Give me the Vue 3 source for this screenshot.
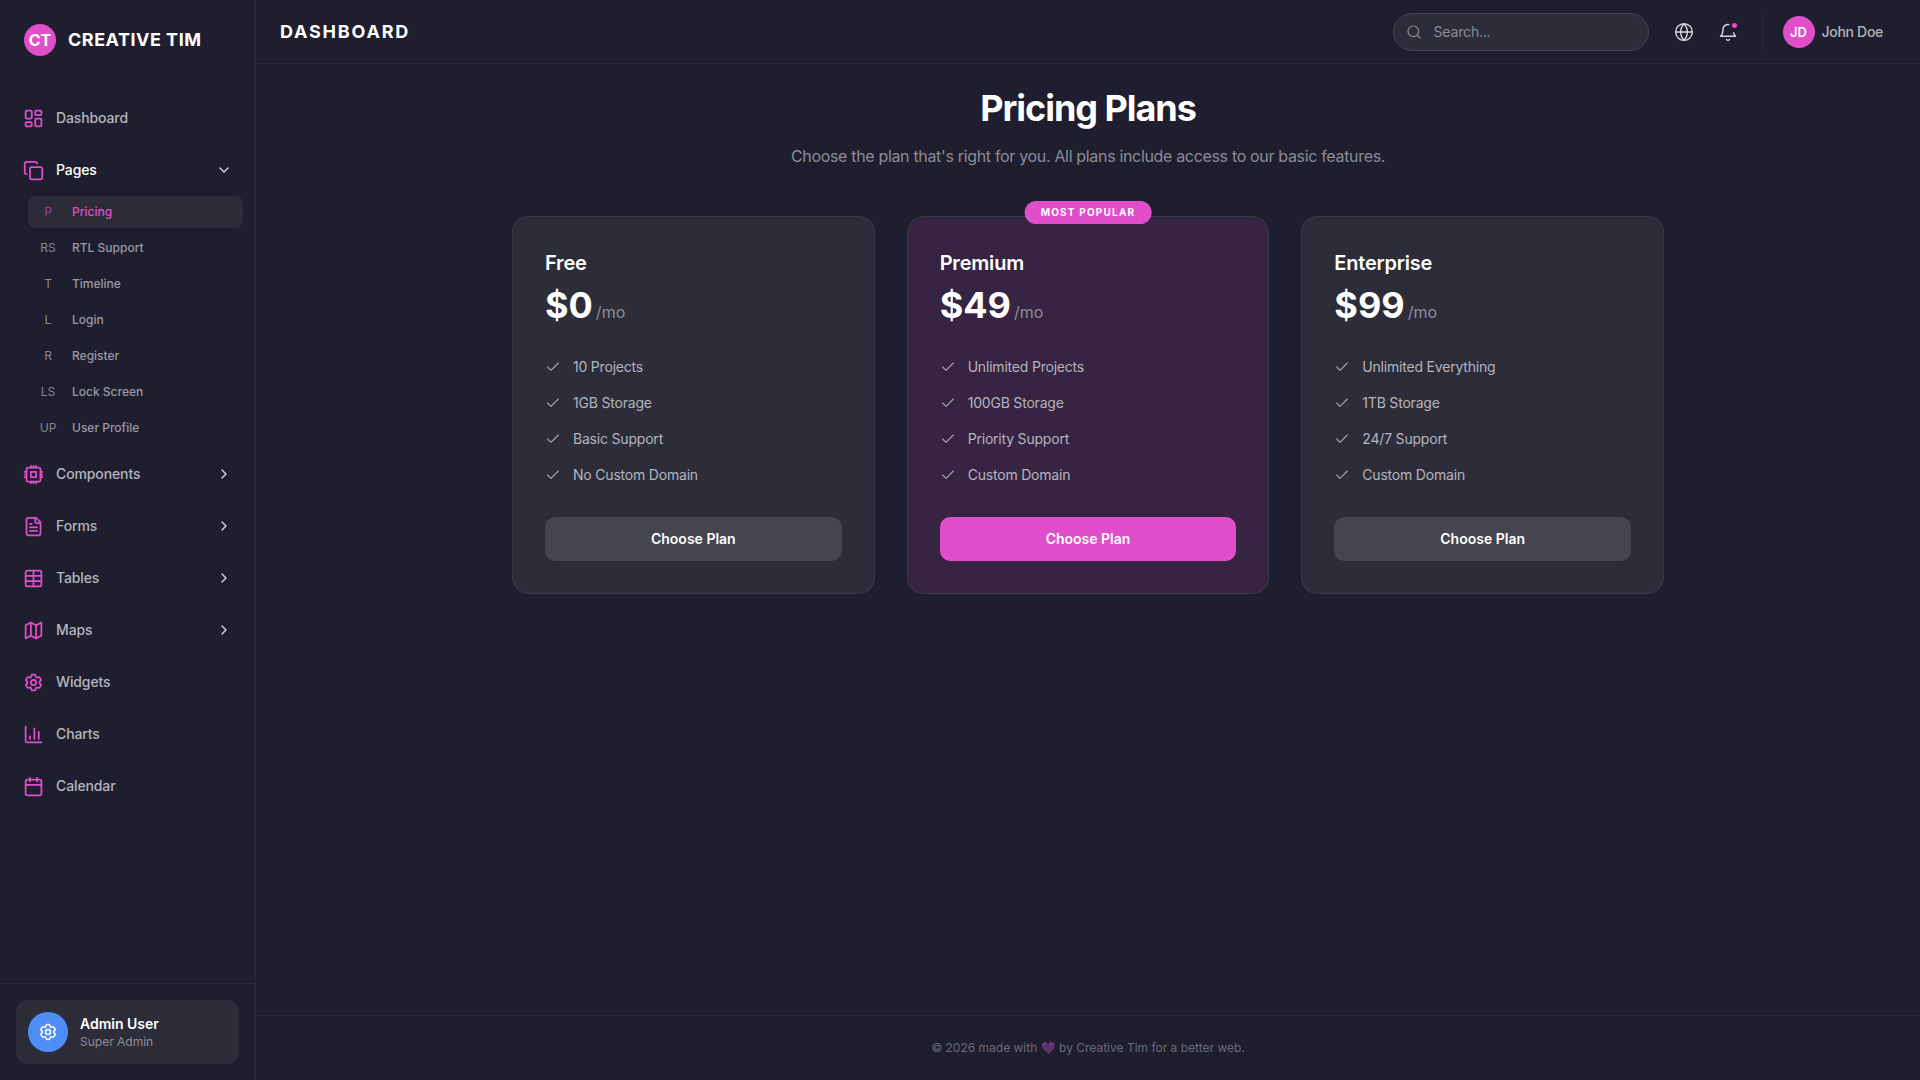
<template>
  <div class="layout">
    <aside class="sidebar">
      <div class="brand">
        <div class="brand-logo">CT</div>
        <span class="brand-name">CREATIVE TIM</span>
      </div>

      <nav class="nav">
        <template v-for="item in navItems" :key="item.label">
          <div class="nav-item" :class="{ open: item.children }">
            <svg class="nav-icon" viewBox="0 0 24 24" v-html="item.icon"></svg>
            <span class="nav-label">{{ item.label }}</span>
            <svg v-if="item.children" class="chevron" viewBox="0 0 24 24"><path d="m6 9 6 6 6-6" /></svg>
            <svg v-else-if="item.more" class="chevron" viewBox="0 0 24 24"><path d="m9 18 6-6-6-6" /></svg>
          </div>
          <div v-if="item.children" class="subnav">
            <div
              v-for="child in item.children"
              :key="child.label"
              class="sub-item"
              :class="{ active: child.active }"
            >
              <span class="sub-short">{{ child.short }}</span>
              <span class="sub-label">{{ child.label }}</span>
            </div>
          </div>
        </template>
      </nav>

      <div class="side-footer">
        <div class="admin-card">
          <div class="admin-avatar">
            <svg viewBox="0 0 24 24" v-html="gearIcon"></svg>
          </div>
          <div class="admin-text">
            <div class="admin-name">Admin User</div>
            <div class="admin-role">Super Admin</div>
          </div>
        </div>
      </div>
    </aside>

    <div class="content">
      <header class="topbar">
        <h2 class="page-title">DASHBOARD</h2>
        <div class="topbar-right">
          <div class="search">
            <svg viewBox="0 0 24 24"><circle cx="11" cy="11" r="8" /><path d="m21 21-4.3-4.3" /></svg>
            <span>Search...</span>
          </div>
          <svg class="top-icon globe" viewBox="0 0 24 24">
            <circle cx="12" cy="12" r="10" />
            <path d="M12 2a14.5 14.5 0 0 0 0 20 14.5 14.5 0 0 0 0-20" />
            <path d="M2 12h20" />
          </svg>
          <div class="bell">
            <svg class="top-icon" viewBox="0 0 24 24">
              <path d="M10.3 21a1.94 1.94 0 0 0 3.4 0" />
              <path d="M13 3.1A6 6 0 0 0 6 8c0 7-3 9-3 9h18s-1.4-1-2.3-4" />
            </svg>
            <span class="bell-dot"></span>
          </div>
          <div class="divider"></div>
          <div class="user">
            <div class="user-avatar">JD</div>
            <span class="user-name">John Doe</span>
          </div>
        </div>
      </header>

      <main class="main">
        <h1 class="title">Pricing Plans</h1>
        <p class="subtitle">Choose the plan that's right for you. All plans include access to our basic features.</p>

        <div class="plans">
          <div v-for="plan in plans" :key="plan.name" class="plan" :class="{ featured: plan.featured }">
            <span v-if="plan.featured" class="badge">MOST POPULAR</span>
            <h3 class="plan-name">{{ plan.name }}</h3>
            <div class="price">
              <span class="amount">{{ plan.price }}</span>
              <span class="per">/mo</span>
            </div>
            <ul class="features">
              <li v-for="f in plan.features" :key="f">
                <svg viewBox="0 0 24 24"><path d="M20 6 9 17l-5-5" /></svg>
                {{ f }}
              </li>
            </ul>
            <button class="choose">Choose Plan</button>
          </div>
        </div>
      </main>

      <footer class="footer">
        <span>© 2026 made with <span class="heart">💜</span> by Creative Tim for a better web.</span>
      </footer>
    </div>
  </div>
</template>

<script setup>
const gearIcon = `<path d="M9.594 3.94c.09-.542.56-.94 1.11-.94h2.593c.55 0 1.02.398 1.11.94l.213 1.281c.063.374.313.686.645.87.074.04.147.083.22.127.325.196.72.257 1.075.124l1.217-.456a1.125 1.125 0 0 1 1.37.49l1.296 2.247a1.125 1.125 0 0 1-.26 1.431l-1.003.827c-.293.241-.438.613-.43.992a7.723 7.723 0 0 1 0 .255c-.008.378.137.75.43.991l1.004.827c.424.35.534.955.26 1.43l-1.298 2.247a1.125 1.125 0 0 1-1.369.491l-1.217-.456c-.355-.133-.75-.072-1.076.124a6.47 6.47 0 0 1-.22.128c-.331.183-.581.495-.644.869l-.213 1.281c-.09.543-.56.94-1.11.94h-2.594c-.55 0-1.019-.398-1.11-.94l-.213-1.281c-.062-.374-.312-.686-.644-.87a6.52 6.52 0 0 1-.22-.127c-.325-.196-.72-.257-1.076-.124l-1.217.456a1.125 1.125 0 0 1-1.369-.49l-1.297-2.247a1.125 1.125 0 0 1 .26-1.431l1.004-.827c.292-.24.437-.613.43-.991a6.932 6.932 0 0 1 0-.255c.007-.38-.138-.751-.43-.992l-1.004-.827a1.125 1.125 0 0 1-.26-1.43l1.297-2.247a1.125 1.125 0 0 1 1.37-.491l1.216.456c.356.133.751.072 1.076-.124.072-.044.146-.086.22-.128.332-.183.582-.495.644-.869l.214-1.28Z"/><circle cx="12" cy="12" r="3"/>`

const navItems = [
  { label: 'Dashboard', icon: '<rect x="3" y="3" width="7" height="9" rx="1"/><rect x="14" y="3" width="7" height="5" rx="1"/><rect x="14" y="12" width="7" height="9" rx="1"/><rect x="3" y="16" width="7" height="5" rx="1"/>' },
  {
    label: 'Pages',
    icon: '<rect x="8" y="8" width="14" height="14" rx="2"/><path d="M4 16c-1.1 0-2-.9-2-2V4c0-1.1.9-2 2-2h10c1.1 0 2 .9 2 2"/>',
    children: [
      { short: 'P', label: 'Pricing', active: true },
      { short: 'RS', label: 'RTL Support' },
      { short: 'T', label: 'Timeline' },
      { short: 'L', label: 'Login' },
      { short: 'R', label: 'Register' },
      { short: 'LS', label: 'Lock Screen' },
      { short: 'UP', label: 'User Profile' },
    ],
  },
  { label: 'Components', more: true, icon: '<rect x="4" y="4" width="16" height="16" rx="2"/><rect x="9" y="9" width="6" height="6"/><path d="M15 2v2M15 20v2M2 15h2M2 9h2M20 15h2M20 9h2M9 2v2M9 20v2M12 2v2M12 20v2M2 12h2M20 12h2"/>' },
  { label: 'Forms', more: true, icon: '<path d="M15 2H6a2 2 0 0 0-2 2v16a2 2 0 0 0 2 2h12a2 2 0 0 0 2-2V7Z"/><path d="M14 2v4a2 2 0 0 0 2 2h4"/><path d="M10 9H8M16 13H8M16 17H8"/>' },
  { label: 'Tables', more: true, icon: '<rect x="3" y="3" width="18" height="18" rx="2"/><path d="M3 9h18M3 15h18M12 3v18"/>' },
  { label: 'Maps', more: true, icon: '<path d="M3 6l6-3 6 3 6-3v15l-6 3-6-3-6 3Z"/><path d="M9 3v15M15 6v15"/>' },
  { label: 'Widgets', icon: gearIcon },
  { label: 'Charts', icon: '<path d="M3 3v16a2 2 0 0 0 2 2h16"/><path d="M18 17V9M13 17V5M8 17v-3"/>' },
  { label: 'Calendar', icon: '<path d="M8 2v4M16 2v4"/><rect x="3" y="4" width="18" height="18" rx="2"/><path d="M3 10h18"/>' },
]

const plans = [
  { name: 'Free', price: '$0', features: ['10 Projects', '1GB Storage', 'Basic Support', 'No Custom Domain'] },
  { name: 'Premium', price: '$49', featured: true, features: ['Unlimited Projects', '100GB Storage', 'Priority Support', 'Custom Domain'] },
  { name: 'Enterprise', price: '$99', features: ['Unlimited Everything', '1TB Storage', '24/7 Support', 'Custom Domain'] },
]
</script>

<style>
html, body {
  margin: 0;
  background: #1e1e2e;
}
</style>

<style scoped>
* {
  box-sizing: border-box;
}
svg {
  fill: none;
  stroke: currentColor;
  stroke-width: 2;
  stroke-linecap: round;
  stroke-linejoin: round;
}
.layout {
  display: flex;
  height: 1080px;
  font-family: Inter, "Liberation Sans", sans-serif;
  background: #1e1e2e;
  color: #fff;
  overflow: hidden;
}
.sidebar {
  width: 256px;
  flex-shrink: 0;
  display: flex;
  flex-direction: column;
  border-right: 1px solid #2d2d3a;
}
.brand {
  display: flex;
  align-items: flex-start;
  gap: 12px;
  padding: 24px 24px 0;
  height: 80px;
  margin-bottom: 12px;
}
.brand-logo {
  width: 32px;
  height: 32px;
  border-radius: 50%;
  background: #e14eca;
  display: flex;
  align-items: center;
  justify-content: center;
  font-size: 16px;
  font-weight: 700;
  flex-shrink: 0;
}
.brand-name {
  font-size: 18px;
  line-height: 32px;
  font-weight: 700;
  letter-spacing: 0.5px;
}
.nav {
  flex: 1;
  padding: 0 12px;
}
.nav-item {
  display: flex;
  align-items: center;
  height: 52px;
  padding: 0 11px 0 12px;
  font-size: 14px;
  font-weight: 500;
  letter-spacing: -0.12px;
  color: #b4b4bd;
}
.nav-item.open {
  color: #fff;
}
.nav-icon {
  width: 21px;
  height: 21px;
  margin: 0 12px 0 -1px;
  color: #e14eca;
}
.nav-label {
  flex: 1;
  padding-bottom: 2px;
}
.chevron {
  width: 16px;
  height: 16px;
  color: #d7d7dc;
}
.subnav {
  padding: 0 0 0 16px;
}
.sub-item {
  display: flex;
  align-items: center;
  height: 32px;
  margin-bottom: 4px;
  border-radius: 8px;
  font-size: 12px;
  font-weight: 500;
  color: #9a9aa5;
}
.sub-item.active {
  background: #2d2d3a;
  color: #e14eca;
}
.sub-short {
  width: 40px;
  margin-right: 4px;
  padding-bottom: 2px;
  text-align: center;
  font-size: 12px;
  font-weight: 400;
  opacity: 0.85;
}
.sub-label {
  padding-bottom: 2px;
}
.sub-item.active .sub-short {
  opacity: 0.6;
}
.side-footer {
  border-top: 1px solid #2d2d3a;
  padding: 16px;
}
.admin-card {
  display: flex;
  align-items: center;
  gap: 12px;
  height: 64px;
  padding: 0 12px;
  border-radius: 12px;
  background: #2d2d3a;
}
.admin-avatar {
  width: 40px;
  height: 40px;
  border-radius: 50%;
  background: #4f8ef7;
  display: flex;
  align-items: center;
  justify-content: center;
}
.admin-avatar svg {
  width: 20px;
  height: 20px;
  stroke-width: 1.8;
}
.admin-text {
  padding-top: 1px;
}
.admin-name {
  font-size: 14px;
  font-weight: 600;
  line-height: 18px;
}
.admin-role {
  margin-top: 1px;
  font-size: 12px;
  line-height: 16px;
  color: #8c8c97;
}
.content {
  flex: 1;
  min-width: 0;
  display: flex;
  flex-direction: column;
}
.topbar {
  height: 64px;
  flex-shrink: 0;
  display: flex;
  align-items: center;
  justify-content: space-between;
  padding: 0 37px 0 24px;
  border-bottom: 1px solid #2d2d3a;
}
.page-title {
  margin: 0;
  font-size: 18px;
  font-weight: 700;
  letter-spacing: 0.1em;
}
.topbar-right {
  display: flex;
  align-items: center;
}
.search {
  width: 256px;
  height: 38px;
  display: flex;
  align-items: center;
  gap: 12px;
  padding: 0 12px;
  border: 1px solid #45454f;
  border-radius: 19px;
  background: #2d2d3a;
  font-size: 14px;
  letter-spacing: -0.15px;
  color: #8c8c97;
}
.search svg {
  width: 16px;
  height: 16px;
  stroke-width: 1.8;
}
.top-icon {
  width: 20px;
  height: 20px;
  color: #d7d7dc;
  display: block;
  stroke-width: 1.7;
}
.globe {
  margin-left: 25px;
}
.bell {
  position: relative;
  margin-left: 24px;
}
.bell-dot {
  position: absolute;
  top: 1px;
  right: 1px;
  width: 5px;
  height: 5px;
  border-radius: 50%;
  background: #e14eca;
}
.divider {
  width: 1px;
  height: 34px;
  margin: 0 20px 0 24px;
  background: #2d2d3a;
}
.user {
  display: flex;
  align-items: center;
  gap: 7px;
  font-size: 14px;
  font-weight: 500;
  color: #b4b4bd;
}
.user-name {
  letter-spacing: -0.3px;
}
.user-avatar {
  width: 32px;
  height: 32px;
  border-radius: 50%;
  background: #e14eca;
  color: #fff;
  display: flex;
  align-items: center;
  justify-content: center;
  font-size: 13px;
  font-weight: 600;
}
.main {
  flex: 1;
  padding: 24px 0 0;
  text-align: center;
}
.title {
  margin: 0 0 16px;
  font-size: 36px;
  line-height: 40px;
  font-weight: 700;
  letter-spacing: -1.04px;
}
.subtitle {
  margin: 0 0 48px;
  font-size: 16px;
  line-height: 24px;
  letter-spacing: -0.33px;
  color: #8c8c97;
}
.plans {
  width: 1152px;
  margin: 0 auto;
  display: grid;
  grid-template-columns: repeat(3, 1fr);
  gap: 32px;
  text-align: left;
}
.plan {
  position: relative;
  padding: 32px;
  border: 1px solid #3a3a47;
  border-radius: 16px;
  background: #2d2d3a;
}
.plan.featured {
  background: #372442;
}
.badge {
  position: absolute;
  top: -16px;
  left: 50%;
  transform: translateX(-50%);
  padding: 4px 16px;
  border-radius: 12px;
  background: #e14eca;
  font-size: 10px;
  line-height: 15px;
  font-weight: 700;
  letter-spacing: 0.12em;
  white-space: nowrap;
}
.plan-name {
  margin: 0 0 8px;
  font-size: 20px;
  line-height: 28px;
  font-weight: 600;
  letter-spacing: -0.2px;
}
.price {
  display: flex;
  align-items: baseline;
  gap: 3px;
  margin-bottom: 32px;
}
.amount {
  font-size: 36px;
  line-height: 40px;
  font-weight: 700;
}
.per {
  font-size: 16px;
  color: #8c8c97;
}
.features {
  list-style: none;
  margin: 0 0 32px;
  padding: 0;
  display: flex;
  flex-direction: column;
  gap: 16px;
}
.features li {
  display: flex;
  align-items: center;
  gap: 12px;
  font-size: 14px;
  line-height: 20px;
  letter-spacing: -0.2px;
  color: #b4b4bd;
}
.features svg {
  width: 16px;
  height: 16px;
  stroke-width: 1.6;
  color: #a9a9b3;
}
.choose {
  display: block;
  width: 100%;
  height: 44px;
  padding-bottom: 2px;
  border: 0;
  border-radius: 10px;
  background: #45454f;
  color: #fff;
  font-family: inherit;
  font-size: 14px;
  font-weight: 600;
}
.featured .choose {
  background: #e14eca;
}
.footer {
  height: 65px;
  flex-shrink: 0;
  display: flex;
  align-items: center;
  justify-content: center;
  padding-bottom: 2px;
  border-top: 1px solid #2d2d3a;
  font-size: 12px;
  color: #6b6b76;
}
.heart {
  opacity: 0.45;
}
</style>
